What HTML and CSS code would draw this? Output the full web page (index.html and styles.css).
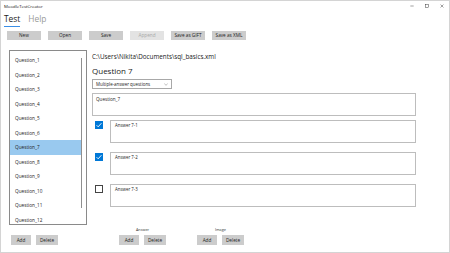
FILE: index.html
```html
<!DOCTYPE html>
<html>
<head>
<meta charset="utf-8">
<link rel="stylesheet" href="styles.css">
</head>
<body>
<div class="window">
  <div class="titlebar">
    <span class="title">MoodleTestCreator</span>
    <div class="controls">
      <svg class="ctl" viewBox="0 0 6 6"><line x1="0.5" y1="3" x2="5.5" y2="3" stroke="#333" stroke-width="0.7"/></svg>
      <svg class="ctl" viewBox="0 0 6 6"><rect x="0.8" y="0.8" width="4.4" height="4.4" fill="none" stroke="#333" stroke-width="0.7"/></svg>
      <svg class="ctl" viewBox="0 0 6 6"><path d="M0.8 0.8L5.2 5.2M5.2 0.8L0.8 5.2" stroke="#333" stroke-width="0.7"/></svg>
    </div>
  </div>
  <div class="tabs">
    <span class="tab active">Test</span>
    <span class="tab">Help</span>
  </div>
  <div class="toolbar">
    <button class="btn wide">New</button>
    <button class="btn wide">Open</button>
    <button class="btn wide">Save</button>
    <button class="btn wide disabled">Append</button>
    <button class="btn wide">Save as GIFT</button>
    <button class="btn wide">Save as XML</button>
  </div>
  <div class="main">
    <div class="left">
      <div class="listbox">
        <ul class="list">
          <li>Question_1</li>
          <li>Question_2</li>
          <li>Question_3</li>
          <li>Question_4</li>
          <li>Question_5</li>
          <li>Question_6</li>
          <li class="selected">Question_7</li>
          <li>Question_8</li>
          <li>Question_9</li>
          <li>Question_10</li>
          <li>Question_11</li>
          <li>Question_12</li>
        </ul>
        <div class="scrollbar"></div>
      </div>
      <div class="btnrow">
        <button class="btn small">Add</button>
        <button class="btn small">Delete</button>
      </div>
    </div>
    <div class="right">
      <div class="path">C:\Users\Nikita\Documents\sql_basics.xml</div>
      <div class="qtitle">Question 7</div>
      <div class="select">
        <span>Multiple-answer questions</span>
        <svg class="chev" viewBox="0 0 6 4"><path d="M0.5 0.8L3 3.2L5.5 0.8" fill="none" stroke="#555" stroke-width="0.6"/></svg>
      </div>
      <div class="qbox">Question_7</div>
      <div class="answers">
        <div class="arow">
          <span class="check on"><svg viewBox="0 0 8 8"><path d="M1.6 4.2L3.2 5.8L6.4 2.2" fill="none" stroke="#fff" stroke-width="0.9"/></svg></span>
          <div class="abox">Answer 7-1</div>
        </div>
        <div class="arow">
          <span class="check on"><svg viewBox="0 0 8 8"><path d="M1.6 4.2L3.2 5.8L6.4 2.2" fill="none" stroke="#fff" stroke-width="0.9"/></svg></span>
          <div class="abox">Answer 7-2</div>
        </div>
        <div class="arow">
          <span class="check"></span>
          <div class="abox">Answer 7-3</div>
        </div>
      </div>
      <div class="bottom">
        <div class="group">
          <div class="glabel">Answer</div>
          <div class="gbtns">
            <button class="btn small">Add</button>
            <button class="btn small">Delete</button>
          </div>
        </div>
        <div class="group">
          <div class="glabel">Image</div>
          <div class="gbtns">
            <button class="btn small">Add</button>
            <button class="btn small">Delete</button>
          </div>
        </div>
      </div>
    </div>
  </div>
</div>
</body>
</html>
```
FILE: styles.css
```css
* { box-sizing: border-box; }
html, body { margin: 0; padding: 0; background: #fff; }
body { font-family: "Open Sans", "Noto Sans", sans-serif; color: #222; }

.window {
  width: 450px;
  height: 253px;
  border: 1px solid #d4d4d4;
  background: #fff;
  overflow: hidden;
}

.titlebar {
  height: 10px;
  display: flex;
  align-items: center;
  justify-content: space-between;
  padding: 0 3px 0 3px;
}
.title { font-size: 4.3px; line-height: 10px; color: #111; }
.controls { display: flex; gap: 11px; align-items: center; padding-right: 2px; }
.ctl { width: 4px; height: 4px; display: block; }

.tabs {
  height: 17px;
  display: flex;
  align-items: flex-start;
  gap: 8px;
  padding: 2px 0 0 3px;
}
.tab {
  font-size: 8.4px;
  line-height: 12px;
  color: #9a9a9a;
  padding-bottom: 1px;
}
.tab.active { color: #222; border-bottom: 1.5px solid #3a8ee6; }

.toolbar {
  display: flex;
  gap: 7px;
  padding: 3px 0 0 6px;
}
.btn {
  border: none;
  background: #cccccc;
  color: #222;
  font-family: "Open Sans", "Noto Sans", sans-serif;
  font-size: 4.7px;
  padding: 0;
  height: 9px;
  line-height: 9px;
  margin: 0;
}
.btn.wide { width: 34px; }
.btn.disabled { background: #e3e3e3; color: #a8a8a8; }
.btn.small { height: 10px; line-height: 10px; width: 20px; }
.btn.small + .btn.small { width: 22px; }

.main {
  display: flex;
  margin-top: 10px;
  gap: 5px;
}

.left { margin-left: 8px; width: 78px; }
.listbox {
  position: relative;
  width: 78px;
  height: 175px;
  border: 1px solid #8a8a8a;
  overflow: hidden;
}
.list {
  list-style: none;
  margin: 0;
  padding: 2px 0 0 0;
}
.list li {
  height: 14.5px;
  line-height: 14.5px;
  font-size: 4.7px;
  padding-left: 5px;
  margin-right: 4px;
  color: #222;
}
.list li.selected { background: #99c9ef; }
.scrollbar {
  position: absolute;
  right: 4px;
  top: 7px;
  width: 1.5px;
  height: 150px;
  background: #8f8f8f;
}

.btnrow {
  display: flex;
  gap: 5px;
  margin: 10px 0 0 2px;
}

.right { width: 324px; }
.path {
  margin-top: 2px;
  font-size: 6.3px;
  line-height: 10px;
  color: #222;
  white-space: nowrap;
}
.qtitle {
  margin-top: 3px;
  font-size: 8px;
  line-height: 12px;
  color: #222;
}
.select {
  margin-top: 2px;
  width: 80px;
  height: 10px;
  border: 1px solid #a8a8a8;
  display: flex;
  align-items: center;
  justify-content: space-between;
  padding: 0 3px 0 3px;
  font-size: 4.4px;
}
.chev { width: 4px; height: 3px; display: block; }
.qbox {
  margin-top: 4px;
  height: 23px;
  border: 1px solid #bdbdbd;
  font-size: 4.6px;
  line-height: 6px;
  padding: 2px 0 0 3px;
}
.answers {
  margin-top: 4px;
  display: flex;
  flex-direction: column;
  gap: 9px;
}
.arow { display: flex; gap: 7px; padding-left: 3px; }
.check {
  width: 8px;
  height: 8px;
  margin-top: 1px;
  border: 1px solid #444;
  flex: none;
  display: flex;
}
.check svg { width: 8px; height: 8px; display: block; margin: -1px; }
.check.on { background: #0078d7; border-color: #0078d7; }
.abox {
  flex: 1;
  height: 23px;
  border: 1px solid #bdbdbd;
  font-size: 4.4px;
  line-height: 6px;
  padding: 1px 0 0 4px;
}

.bottom {
  display: flex;
  gap: 31px;
  padding-left: 27px;
  margin-top: 20px;
}
.group { display: flex; flex-direction: column; align-items: center; }
.glabel { font-size: 3.8px; line-height: 6px; color: #333; }
.gbtns { display: flex; gap: 5px; margin-top: 2px; }
```
